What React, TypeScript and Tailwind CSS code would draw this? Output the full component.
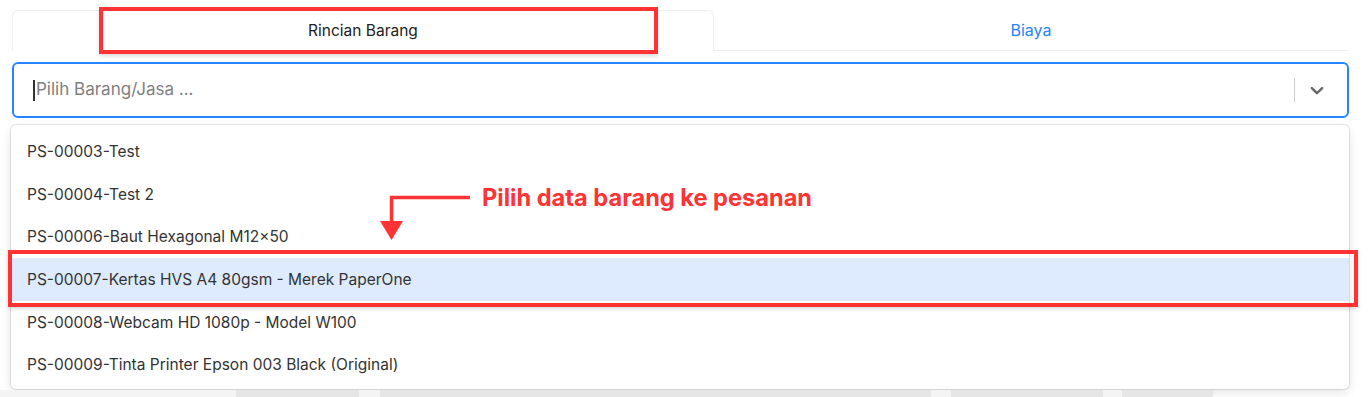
import React from "react";

const items = [
  "PS-00003-Test",
  "PS-00004-Test 2",
  "PS-00006-Baut Hexagonal M12×50",
  "PS-00007-Kertas HVS A4 80gsm - Merek PaperOne",
  "PS-00008-Webcam HD 1080p - Model W100",
  "PS-00009-Tinta Printer Epson 003 Black (Original)",
];

function Tabs() {
  return (
    <div className="flex items-end h-[41px]">
      <div className="w-[702px] h-[41px] flex items-center justify-center rounded-t-[6px] border border-b-0 border-[#efefef] text-[15.5px] text-[#222]">
        Rincian Barang
      </div>
      <div className="w-[634px] h-[41px] flex items-center justify-center border-b border-[#efefef] text-[16px] text-[#2684ff]">
        Biaya
      </div>
    </div>
  );
}

function SelectBox() {
  return (
    <div className="mt-[11px] h-[56px] flex items-center rounded-[6px] border-2 border-[#2684ff] bg-white">
      <div className="flex-1 flex items-center pl-[19px]">
        <span className="w-[2px] h-[21px] bg-[#333]" />
        <span className="text-[17px] text-[#808080] ml-[1px]">Pilih Barang/Jasa ...</span>
      </div>
      <span className="w-px h-[24px] bg-[#cccccc]" />
      <div className="w-[52px] flex items-center pl-[11px]">
        <svg width="22" height="22" viewBox="0 0 20 20" fill="#666">
          <path d="M4.516 7.548c0.436-0.446 1.043-0.481 1.576 0l3.908 3.747 3.908-3.747c0.533-0.481 1.141-0.446 1.574 0 0.436 0.445 0.408 1.197 0 1.615-0.406 0.418-4.695 4.502-4.695 4.502-0.217 0.223-0.502 0.335-0.787 0.335s-0.57-0.112-0.789-0.335c0 0-4.287-4.084-4.695-4.502s-0.436-1.170 0-1.615z" />
        </svg>
      </div>
    </div>
  );
}

function Menu() {
  return (
    <div className="mt-[7px] -ml-px w-[1338px] rounded-[5px] bg-white pt-[5.5px] pb-[3px] shadow-[0_0_0_1px_rgba(0,0,0,0.1),0_4px_11px_rgba(0,0,0,0.1)]">
      {items.map((label, i) => (
        <div
          key={label}
          className={
            i === 3
              ? "h-[42.6px] flex items-center pl-[16px] text-[15.5px] text-[#333] bg-[#deebff]"
              : "h-[42.6px] flex items-center pl-[16px] text-[15.5px] text-[#333]"
          }
        >
          {label}
        </div>
      ))}
    </div>
  );
}

export default function App() {
  return (
    <div className="relative w-[1370px] h-[397px] overflow-hidden bg-white font-['Inter','Liberation_Sans',sans-serif]">
      <div className="pt-[10px] pl-[12px] pr-[21px]">
        <Tabs />
        <SelectBox />
        <Menu />
      </div>
      <div className="flex h-[8px] mt-[1px]">
        <div className="w-[236px] bg-[#f4f4f4]" />
        <div className="w-[123px] bg-[#e6e6e6]" />
        <div className="w-[21px] bg-[#f4f4f4]" />
        <div className="w-[551px] bg-[#e6e6e6]" />
        <div className="w-[20px] bg-[#f4f4f4]" />
        <div className="w-[152px] bg-[#e6e6e6]" />
        <div className="w-[19px] bg-[#f4f4f4]" />
        <div className="w-[91px] bg-[#e6e6e6]" />
      </div>

      {/* annotations */}
      <div className="absolute left-[99px] top-[7px] w-[559px] h-[47px] border-[4px] border-[#ff3333] shadow-[0_2px_4px_rgba(0,0,0,0.15)]" />
      <div className="absolute left-[8px] top-[250px] w-[1350px] h-[57px] border-[4px] border-[#ff3333] shadow-[0_2px_4px_rgba(0,0,0,0.15)]" />
      <svg className="absolute left-[378px] top-[194px]" width="96" height="48" viewBox="0 0 96 48">
        <path d="M92 3.5 H13.5 V30" stroke="#ff3333" strokeWidth="3.5" fill="none" />
        <path d="M2 27 H25 L13.5 46 Z" fill="#ff3333" />
      </svg>
      <div className="absolute left-[482px] top-[183px] text-[23.6px] font-bold text-[#ff3333] leading-[30px]">
        Pilih data barang ke pesanan
      </div>
    </div>
  );
}
